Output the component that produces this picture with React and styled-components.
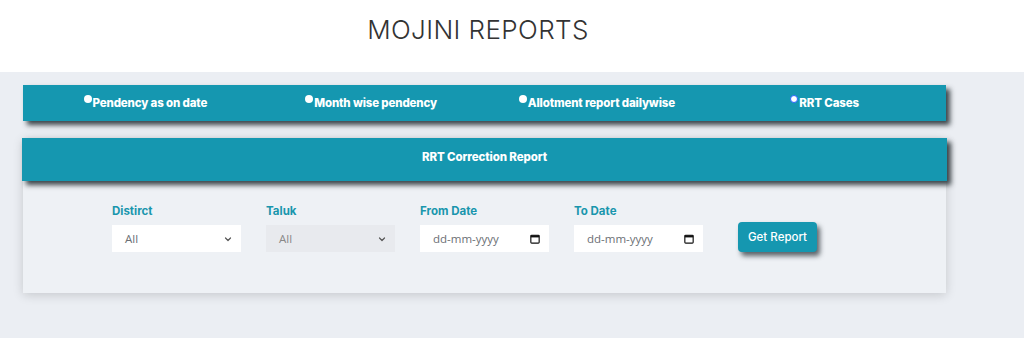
import React from "react";
import styled, { createGlobalStyle } from "styled-components";

const Global = createGlobalStyle`
  html, body { margin: 0; padding: 0; }
  body {
    background: #ebeef3;
    font-family: Inter, "Noto Sans", "Liberation Sans", sans-serif;
    width: 1024px;
    height: 338px;
    overflow: hidden;
  }
`;

const TEAL = "#1597b0";

const Header = styled.header`
  height: 72px;
  background: #ffffff;
  display: flex;
  align-items: flex-start;
  justify-content: center;
  padding-right: 68px;
  box-sizing: border-box;
`;

const Title = styled.h1`
  margin: 14px 0 0;
  font-family: Inter, "Noto Sans", sans-serif;
  font-weight: 300;
  font-size: 26px;
  letter-spacing: 0.4px;
  color: #333;
`;

const Main = styled.main`
  width: 923px;
  margin-left: 23px;
  padding-top: 13px;
  display: flex;
  flex-direction: column;
  gap: 17px;
`;

const TabBar = styled.div`
  height: 36px;
  background: ${TEAL};
  box-shadow: 4px 4px 5px rgba(30, 40, 45, 0.85);
  display: grid;
  grid-template-columns: repeat(4, 1fr);
  align-items: center;
`;

const Tab = styled.label`
  display: flex;
  justify-content: center;
  align-items: flex-start;
  gap: 1px;
  color: #fff;
  font-size: 11.5px;
  font-weight: 800;
  letter-spacing: -0.15px;
  margin-left: ${(p) => p.$shift || 0}px;
`;

const Dot = styled.span`
  width: 8px;
  height: 8px;
  border-radius: 50%;
  box-sizing: border-box;
  background: #fff;
  border: ${(p) => (p.$active ? "1.5px solid #2a63ff" : "none")};
  margin-top: -1px;
  flex-shrink: 0;
`;

const Card = styled.section`
  background: #eef1f5;
  box-shadow: 0 2px 10px rgba(0, 0, 0, 0.16);
`;

const CardHead = styled.div`
  height: 43px;
  background: ${TEAL};
  box-shadow: 4px 4px 5px rgba(30, 40, 45, 0.85);
  display: flex;
  justify-content: center;
  padding-top: 12px;
  box-sizing: border-box;
  color: #fff;
  font-size: 11.5px;
  font-weight: 800;
  letter-spacing: -0.1px;
  position: relative;
  margin-left: -1px;
  margin-right: -1px;
`;

const CardBody = styled.div`
  height: 112px;
  box-sizing: border-box;
  padding: 23px 0 0 89px;
  display: flex;
  align-items: flex-start;
`;

const Field = styled.div`
  width: 129px;
  margin-right: 25px;
  display: flex;
  flex-direction: column;
  gap: 7px;
`;

const Label = styled.span`
  color: #1996ad;
  font-size: 11.5px;
  font-weight: 700;
  height: 14px;
`;

const Control = styled.div`
  position: relative;
  height: 27px;
  background: ${(p) => (p.$disabled ? "#e8eaee" : "#ffffff")};
  display: flex;
  align-items: center;
  justify-content: space-between;
  padding: 0 9px 0 13px;
  box-sizing: border-box;
  font-family: "Open Sans", "Noto Sans", sans-serif;
  font-size: 11.5px;
  color: ${(p) => (p.$muted ? "#888" : "#6b6f75")};
`;

const Button = styled.button`
  margin-top: 18px;
  margin-left: 10px;
  width: 79px;
  height: 30px;
  border: none;
  border-radius: 4px;
  background: ${TEAL};
  color: #fff;
  font-family: Inter, "Noto Sans", sans-serif;
  font-size: 11.5px;
  font-weight: 500;
  box-shadow: 3px 4px 5px rgba(30, 40, 45, 0.7);
  cursor: pointer;
`;

const Chevron = () => (
  <svg width="8" height="8" viewBox="0 0 16 16" fill="none" stroke="#555" strokeWidth="2.4" strokeLinecap="round" strokeLinejoin="round">
    <path d="M3 6l5 5 5-5" />
  </svg>
);

const Calendar = () => (
  <svg width="10" height="10" viewBox="0 0 12 12">
    <rect x="1" y="1.5" width="10" height="9.5" rx="1" fill="none" stroke="#111" strokeWidth="1.4" />
    <rect x="1" y="1.5" width="10" height="2.6" fill="#111" />
  </svg>
);

const tabs = [
  { label: "Pendency as on date", shift: 14 },
  { label: "Month wise pendency", shift: 4 },
  { label: "Allotment report dailywise", shift: -6 },
  { label: "RRT Cases", shift: -12, active: true },
];

export default function App() {
  return (
    <>
      <Global />
      <Header>
        <Title>MOJINI REPORTS</Title>
      </Header>
      <Main>
        <TabBar>
          {tabs.map((t) => (
            <Tab key={t.label} $shift={t.shift}>
              <Dot $active={t.active} />
              {t.label}
            </Tab>
          ))}
        </TabBar>
        <Card>
          <CardHead>RRT Correction Report</CardHead>
          <CardBody>
            <Field>
              <Label>Distirct</Label>
              <Control>
                All
                <Chevron />
              </Control>
            </Field>
            <Field>
              <Label>Taluk</Label>
              <Control $disabled $muted>
                All
                <Chevron />
              </Control>
            </Field>
            <Field>
              <Label>From Date</Label>
              <Control>
                dd-mm-yyyy
                <Calendar />
              </Control>
            </Field>
            <Field>
              <Label>To Date</Label>
              <Control>
                dd-mm-yyyy
                <Calendar />
              </Control>
            </Field>
            <Button>Get Report</Button>
          </CardBody>
        </Card>
      </Main>
    </>
  );
}
